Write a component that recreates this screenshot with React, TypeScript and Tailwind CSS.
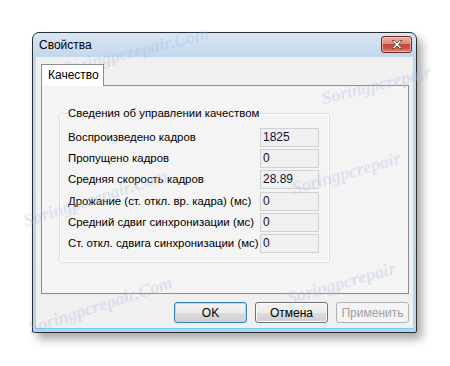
import React from "react";

const rows: [string, string][] = [
  ["Воспроизведено кадров", "1825"],
  ["Пропущено кадров", "0"],
  ["Средняя скорость кадров", "28.89"],
  ["Дрожание (ст. откл. вр. кадра) (мс)", "0"],
  ["Средний сдвиг синхронизации (мс)", "0"],
  ["Ст. откл. сдвига синхронизации (мс)", "0"],
];

function CloseIcon() {
  return (
    <svg width="14" height="11" viewBox="0 0 14 11">
      <path
        d="M2 1.5 L4.5 1.5 L7 4 L9.5 1.5 L12 1.5 L8.5 5.5 L12 9.5 L9.5 9.5 L7 7 L4.5 9.5 L2 9.5 L5.5 5.5 Z"
        fill="#ffffff"
        stroke="#6b4a44"
        strokeWidth="0.9"
        strokeLinejoin="round"
      />
    </svg>
  );
}

const wm =
  "pointer-events-none absolute font-['Liberation_Serif',serif] italic font-bold text-[18px] text-[#a8b8e0] opacity-30 whitespace-nowrap";

export default function App() {
  return (
    <div className="relative w-[450px] h-[366px] overflow-hidden bg-white pt-[32px] pl-[32px] font-['Liberation_Sans',Arial,sans-serif] text-[11.4px] text-black">
      <div className="w-[385px] h-[301px] flex flex-col rounded-t-[7px] rounded-b-[2px] border border-[#262d36] bg-[linear-gradient(to_bottom,#d9e6f4_0px,#c3d7ec_24px,#bcd2ea_100%)] shadow-[5px_6px_10px_rgba(0,0,0,0.35)]">
        {/* Title bar */}
        <div className="h-[24px] flex items-start justify-between pl-[6px] pr-[4px]">
          <span className="leading-[24px] text-[12px] text-black">Свойства</span>
          <div className="mt-[3px] w-[31px] h-[17px] rounded-[3px] border border-[#6e2a20] bg-[linear-gradient(to_bottom,#eab0a4_0%,#d98c7c_45%,#c2483a_50%,#c9584a_75%,#dc8c7c_100%)] shadow-[inset_0_0_0_1px_rgba(255,220,210,0.55)] flex items-center justify-center">
            <CloseIcon />
          </div>
        </div>
        {/* Client */}
        <div className="flex-1 mx-[3px] mb-[3px] border-b border-[#6ccfee] bg-[#f0f0f0] pt-[7px] pl-[5px] pr-[4px] flex flex-col">
          <div className="relative z-10 -mb-px w-[63px] h-[22px] border border-b-0 border-[#898c95] bg-white pl-[6px] leading-[21px] text-[12px]">
            Качество
          </div>
          <div className="h-[209px] border border-[#898c95] bg-[#f4f4f4]">
            <div className="relative mt-[27px] ml-[17px] w-[271px] h-[150px] rounded-[3px] border border-[#d5dfe5] shadow-[inset_0_0_0_1px_#ffffff] pt-[14px] pl-[8px] flex flex-col gap-[2.2px]">
              <span className="absolute left-[7px] -top-[9px] px-[1px] bg-[#f4f4f4] leading-[16px]">
                Сведения об управлении качеством
              </span>
              {rows.map(([label, value]) => (
                <div key={label} className="flex items-center h-[19px]">
                  <span className="w-[192px] whitespace-nowrap">{label}</span>
                  <div className="w-[59px] h-[19px] border border-[#cfd2d4] bg-[#f0f0f0] pl-[2px] leading-[17px] text-[12px] text-[#101030]">
                    {value}
                  </div>
                </div>
              ))}
            </div>
          </div>
          <div className="mt-[8px] flex justify-end gap-[8px] text-[12px]">
            <div className="w-[73px] h-[21px] rounded-[3px] border border-[#3c7fb1] bg-[linear-gradient(to_bottom,#f2f2f2_0%,#ebebeb_50%,#dddddd_50%,#cfcfcf_100%)] shadow-[inset_0_0_0_1px_#a6def6] flex items-center justify-center">
              OK
            </div>
            <div className="w-[73px] h-[21px] rounded-[3px] border border-[#707070] bg-[linear-gradient(to_bottom,#f2f2f2_0%,#ebebeb_50%,#dddddd_50%,#cfcfcf_100%)] shadow-[inset_0_0_0_1px_#fcfcfc] flex items-center justify-center">
              Отмена
            </div>
            <div className="w-[73px] h-[21px] rounded-[3px] border border-[#adb2b5] bg-[#f4f4f4] text-[#a0a0a0] flex items-center justify-center">
              Применить
            </div>
          </div>
        </div>
      </div>

      {/* watermarks */}
      <span className={wm + " left-[60px] top-[38px] -rotate-[14deg]"}>Soringpcrepair.Com</span>
      <span className={wm + " left-[320px] top-[72px] -rotate-[14deg]"}>Soringpcrepair</span>
      <span className={wm + " left-[20px] top-[185px] -rotate-[18deg]"}>Soringpcrepair.Com</span>
      <span className={wm + " left-[290px] top-[160px] -rotate-[16deg]"}>Soringpcrepair</span>
      <span className={wm + " left-[25px] top-[292px] -rotate-[18deg]"}>Soringpcrepair.Com</span>
      <span className={wm + " left-[285px] top-[270px] -rotate-[16deg]"}>Soringpcrepair</span>
    </div>
  );
}
